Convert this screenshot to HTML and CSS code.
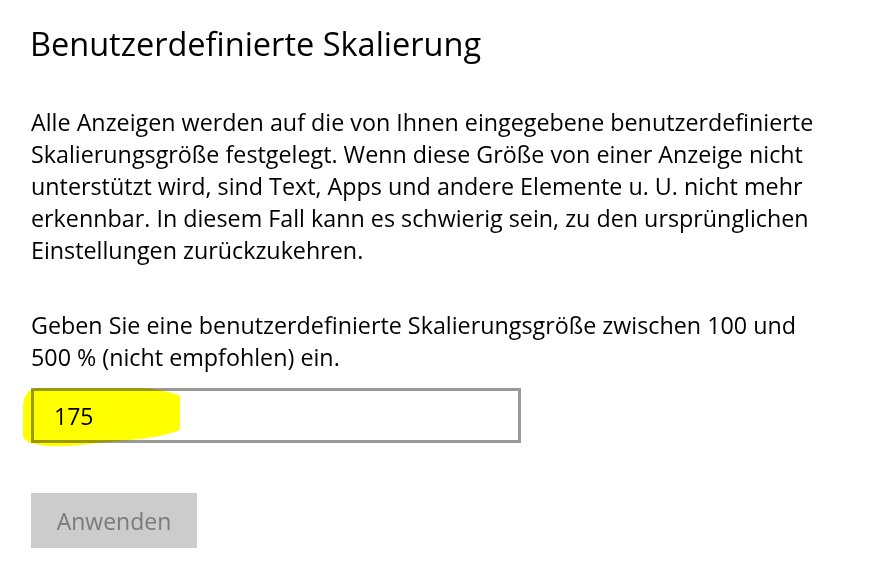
FILE: index.html
```html
<!DOCTYPE html>
<html lang="de">
<head>
<meta charset="utf-8">
<link rel="stylesheet" href="styles.css">
</head>
<body>
<div class="page">
  <h1 class="title">Benutzerdefinierte Skalierung</h1>
  <p class="text warn">Alle Anzeigen werden auf die von Ihnen eingegebene benutzerdefinierte<br>Skalierungsgröße festgelegt. Wenn diese Größe von einer Anzeige nicht<br>unterstützt wird, sind Text, Apps und andere Elemente u. U. nicht mehr<br>erkennbar. In diesem Fall kann es schwierig sein, zu den ursprünglichen<br>Einstellungen zurückzukehren.</p>
  <p class="text prompt">Geben Sie eine benutzerdefinierte Skalierungsgröße zwischen 100 und<br>500 % (nicht empfohlen) ein.</p>
  <div class="field-wrap">
    <div class="field"><span class="value">175</span></div>
    <svg class="marker" width="170" height="62" viewBox="0 0 170 62">
      <path d="M14 2 L118 2 C135 3 150 6 158 10 L158 44 C148 48 135 51 118 53 L75 57 C62 59 40 61 26 60 C10 58 2 56 1 50 L1 20 C2 10 5 4 14 2 Z" fill="#ffff00"/>
    </svg>
  </div>
  <div class="actions"><button class="apply" disabled>Anwenden</button></div>
</div>
</body>
</html>
```
FILE: styles.css
```css
html, body {
  margin: 0;
  padding: 0;
  background: #ffffff;
}
.page {
  padding: 24px 0 0 31px;
  font-family: "Open Sans", "Noto Sans", sans-serif;
  color: #000000;
}
.title {
  margin: 0 0 0 -1px;
  font-weight: 400;
  font-size: 32.5px;
  line-height: 40px;
}
.text {
  margin: 0;
  font-size: 23.3px;
  line-height: 32px;
  white-space: nowrap;
}
.warn {
  margin-top: 42px;
}
.prompt {
  margin-top: 43px;
}
.field-wrap {
  position: relative;
  margin-top: 15px;
  width: 490px;
}
.field {
  box-sizing: border-box;
  width: 490px;
  height: 55px;
  border: 3px solid #999999;
  background: #ffffff;
  display: flex;
  align-items: center;
  padding-left: 20px;
  font-size: 23px;
}
.marker {
  position: absolute;
  left: -9px;
  top: -2px;
  mix-blend-mode: multiply;
}
.value {
  position: relative;
  z-index: 1;
}
.actions {
  margin-top: 50px;
}
.apply {
  display: block;
  width: 166px;
  height: 55px;
  border: 0;
  background: #cccccc;
  color: #7a7a7a;
  font-family: "Open Sans", "Noto Sans", sans-serif;
  font-size: 23px;
  padding: 0;
}
```
